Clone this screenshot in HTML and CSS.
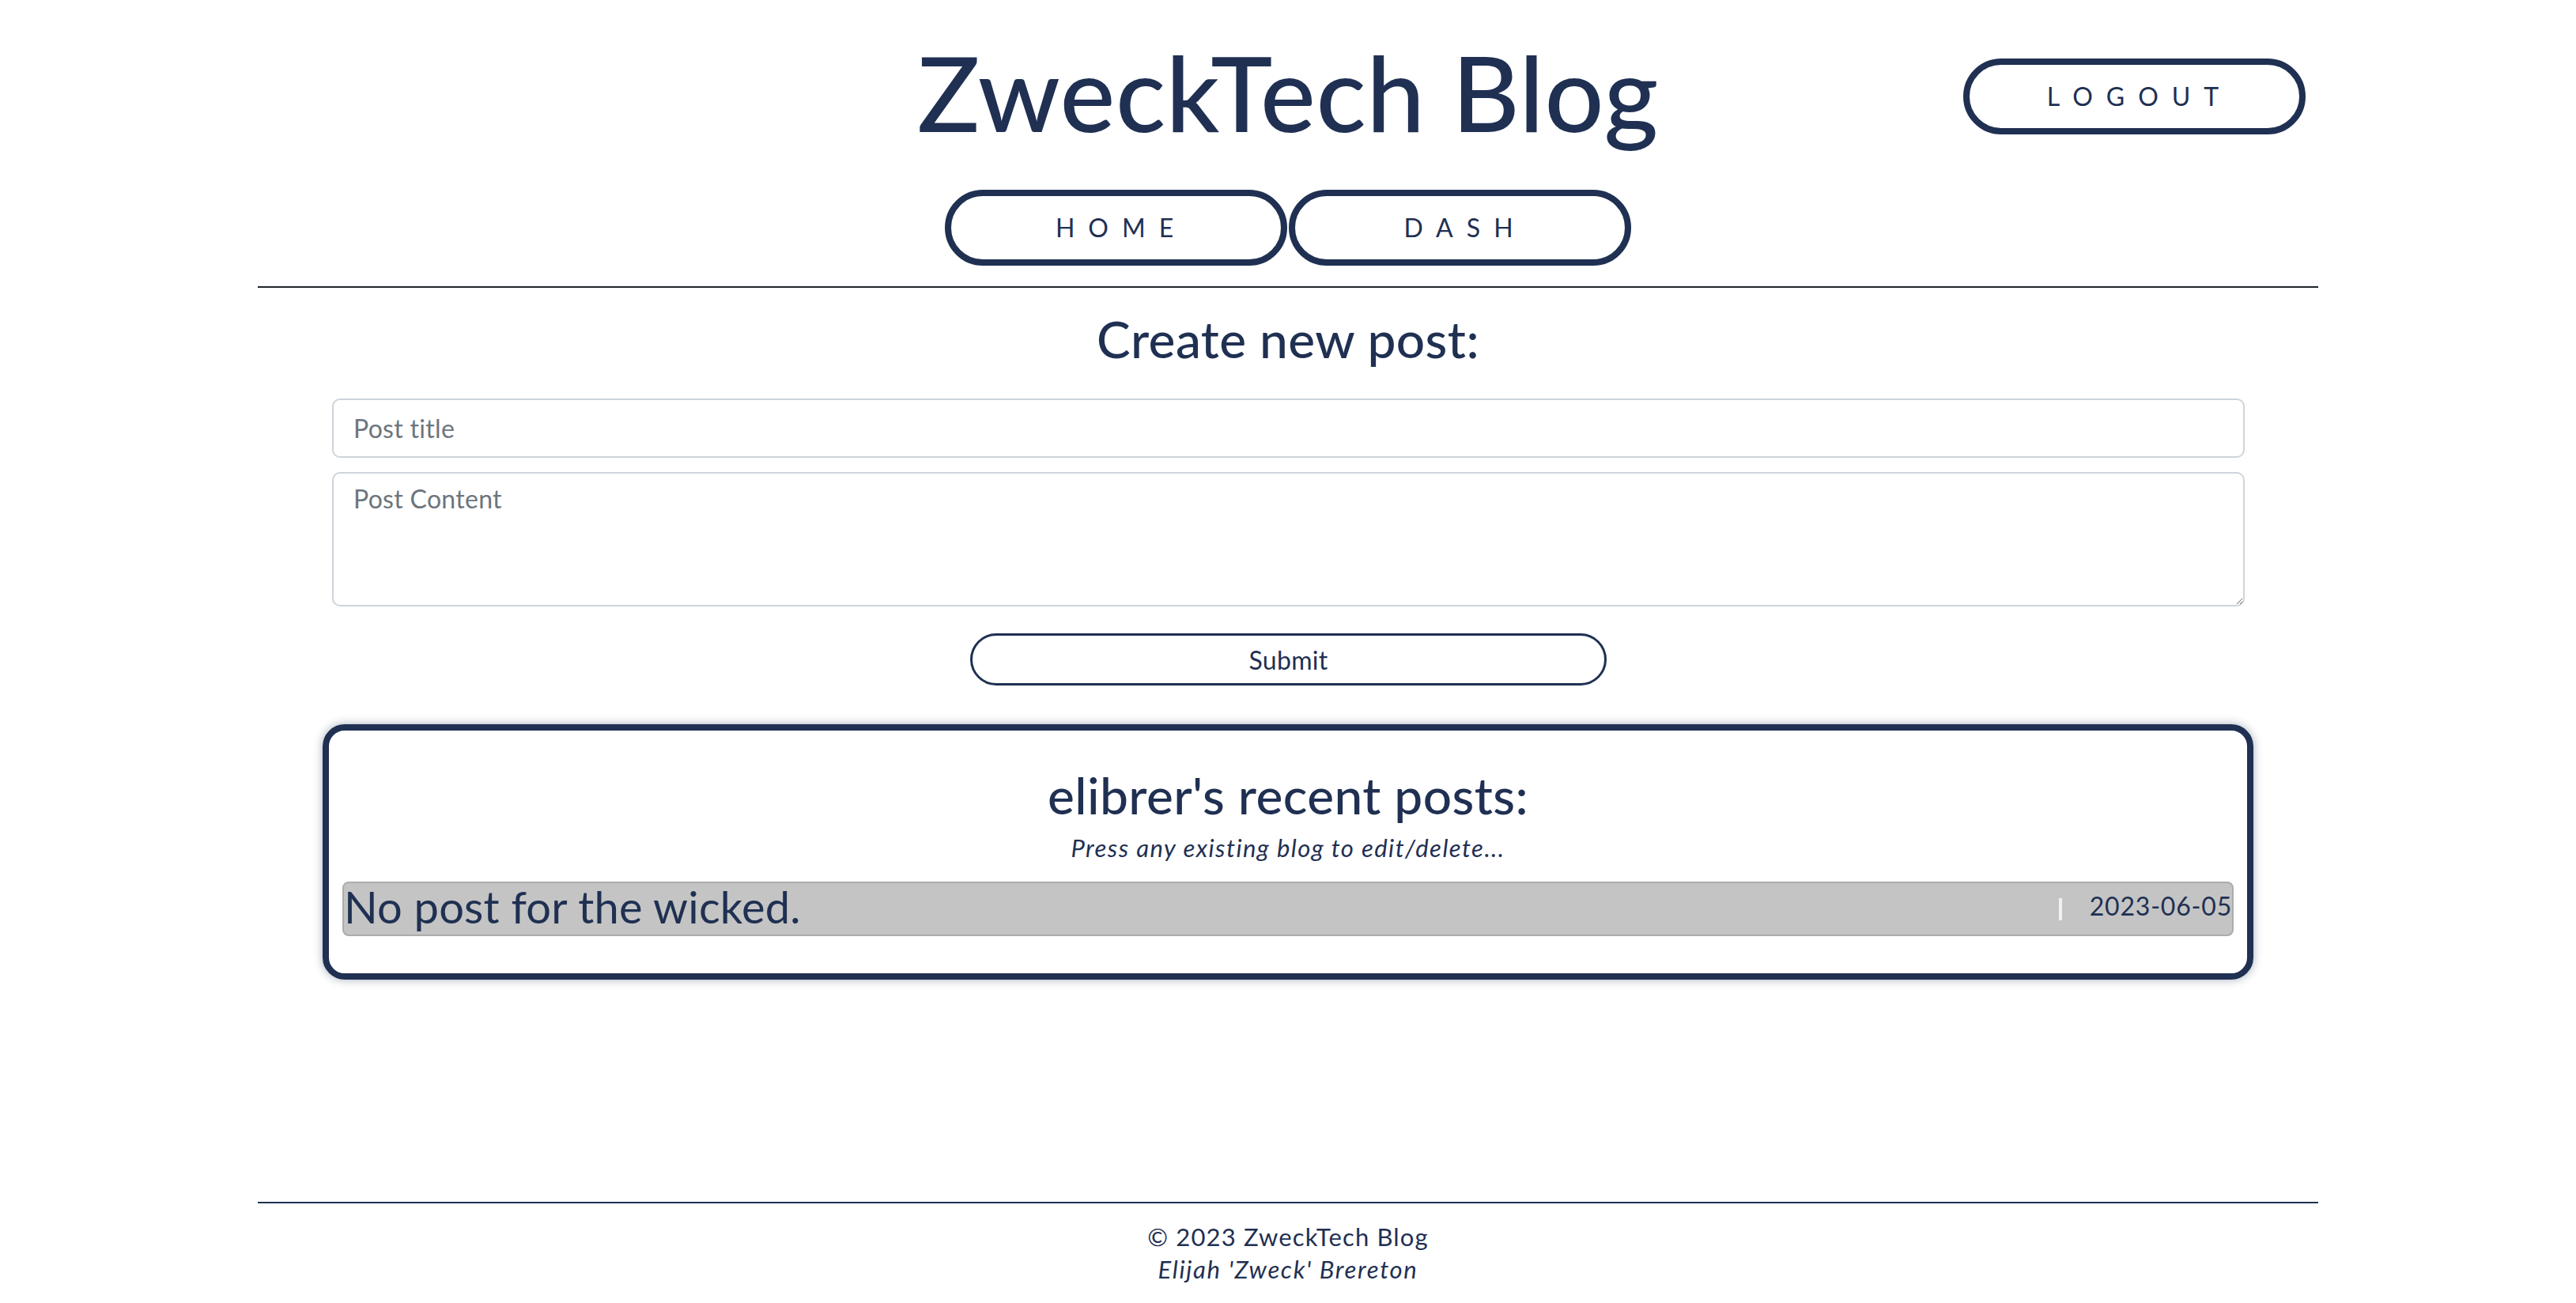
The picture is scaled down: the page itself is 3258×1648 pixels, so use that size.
FILE: index.html
```html
<!DOCTYPE html>
<html lang="en">
<head>
<meta charset="utf-8">
<title>ZweckTech Blog - Dashboard</title>
<link rel="stylesheet" href="styles.css">
</head>
<body>
<div class="page">
  <header class="site-header">
    <div class="header-top">
      <h1 class="site-title">ZweckTech Blog</h1>
      <a class="pill logout" href="#">Logout</a>
    </div>
    <nav class="main-nav">
      <a class="pill" href="#">Home</a>
      <a class="pill" href="#">Dash</a>
    </nav>
    <div class="rule rule-dark"></div>
  </header>

  <main class="content">
    <section class="new-post">
      <h2 class="section-title">Create new post:</h2>
      <form class="post-form">
        <input class="field" type="text" placeholder="Post title">
        <textarea class="field field-area" placeholder="Post Content"></textarea>
        <button class="submit-btn" type="button">Submit</button>
      </form>
    </section>

    <section class="posts-card">
      <h2 class="section-title">elibrer's recent posts:</h2>
      <p class="hint">Press any existing blog to edit/delete...</p>
      <div class="post-row">
        <h3 class="post-title">No post for the wicked.</h3>
        <div class="post-meta">
          <span class="sep"></span>
          <span class="post-date">2023-06-05</span>
        </div>
      </div>
    </section>
  </main>

  <footer class="site-footer">
    <div class="rule rule-navy"></div>
    <div class="footer-text">
      <p class="copyright">© 2023 ZweckTech Blog</p>
      <p class="author">Elijah 'Zweck' Brereton</p>
    </div>
  </footer>
</div>
</body>
</html>
```

FILE: styles.css
```css
* { box-sizing: border-box; }

html, body {
  margin: 0;
  padding: 0;
  background: #ffffff;
}

body {
  font-family: "Lato", "Noto Sans", "Liberation Sans", sans-serif;
  color: #1f3052;
  font-size: 32px;
  line-height: 1.2;
}

.page {
  width: 2606px;
  margin: 0 auto;
  min-height: 100vh;
  display: flex;
  flex-direction: column;
}

/* Header */
.site-header {
  padding-top: 37px;
}

.header-top {
  display: grid;
  grid-template-columns: 1fr auto 1fr;
  align-items: start;
}

.site-title {
  grid-column: 2;
  margin: 0;
  font-size: 132px;
  font-weight: 500;
  line-height: 1.2;
  letter-spacing: 0.5px;
  color: #1f3052;
  text-align: center;
}

.logout {
  grid-column: 3;
  justify-self: end;
  margin-top: 37px;
  margin-right: 16px;
}

.pill {
  display: inline-flex;
  align-items: center;
  justify-content: center;
  width: 433px;
  height: 96px;
  border: 8px solid #1f3052;
  border-radius: 48px;
  background: #ffffff;
  color: #1f3052;
  text-decoration: none;
  text-transform: uppercase;
  font-size: 32px;
  letter-spacing: 17px;
  padding-left: 13px;
}

.main-nav {
  display: flex;
  justify-content: center;
  gap: 2px;
  margin-top: 45px;
}

.rule {
  height: 2px;
  width: 100%;
}

.rule-dark {
  margin-top: 26px;
  background: #212529;
}

.rule-navy {
  background: #1f3052;
}

/* Content */
.content {
  flex: 1;
}

.section-title {
  margin: 0;
  font-size: 64px;
  font-weight: 500;
  line-height: 1.2;
  letter-spacing: 0.4px;
  text-align: center;
  color: #1f3052;
}

.new-post {
  padding-top: 27px;
}

.post-form {
  margin: 36px 93px 0 94px;
  display: flex;
  flex-direction: column;
  align-items: center;
}

.field {
  display: block;
  width: 100%;
  font-family: inherit;
  font-size: 32px;
  letter-spacing: 0.3px;
  color: #1f3052;
  border: 2px solid #ced4da;
  border-radius: 10px;
  background: #ffffff;
  padding: 0 25px;
  outline: none;
}

input.field {
  height: 75px;
  line-height: normal;
}

.field::placeholder {
  color: #6c757d;
}

.field-area {
  height: 170px;
  margin-top: 18px;
  padding: 13px 25px;
  line-height: 1.2;
  resize: vertical;
}

.submit-btn {
  margin-top: 34px;
  width: 805px;
  height: 66px;
  border: 3px solid #1f3052;
  border-radius: 33px;
  background: #ffffff;
  color: #1f3052;
  font-family: inherit;
  font-size: 32px;
  letter-spacing: 0.3px;
  cursor: pointer;
}

/* Posts card */
.posts-card {
  margin: 49px 82px 0 82px;
  border: 8px solid #1f3052;
  border-radius: 28px;
  box-shadow: 0 0 12px rgba(31, 48, 82, 0.4);
  padding: 44px 17px 47px;
}

.hint {
  margin: 9px 0 0;
  text-align: center;
  font-style: italic;
  font-size: 31px;
  letter-spacing: 1.45px;
  line-height: 1.2;
}

.post-row {
  margin-top: 24px;
  height: 69px;
  display: flex;
  justify-content: space-between;
  align-items: flex-start;
  background: #c4c4c4;
  border: 2px solid #acacac;
  border-radius: 8px;
}

.post-title {
  margin: 0;
  font-size: 56px;
  font-weight: 400;
  line-height: 60px;
  letter-spacing: 0.2px;
}

.post-meta {
  display: flex;
  align-items: flex-start;
  padding-top: 10px;
}

.sep {
  display: block;
  width: 4px;
  height: 28px;
  margin-top: 9px;
  margin-right: 35px;
  background: #f2f2f2;
}

.post-date {
  font-size: 32px;
  line-height: 1.2;
  letter-spacing: 0.8px;
}

/* Footer */
.site-footer {
  margin-top: auto;
}

.footer-text {
  padding: 22px 0 22px;
  text-align: center;
  font-size: 31px;
  line-height: 41px;
}

.footer-text p {
  margin: 0;
}

.copyright {
  letter-spacing: 1.15px;
}

.author {
  font-style: italic;
  letter-spacing: 1.7px;
}
```
